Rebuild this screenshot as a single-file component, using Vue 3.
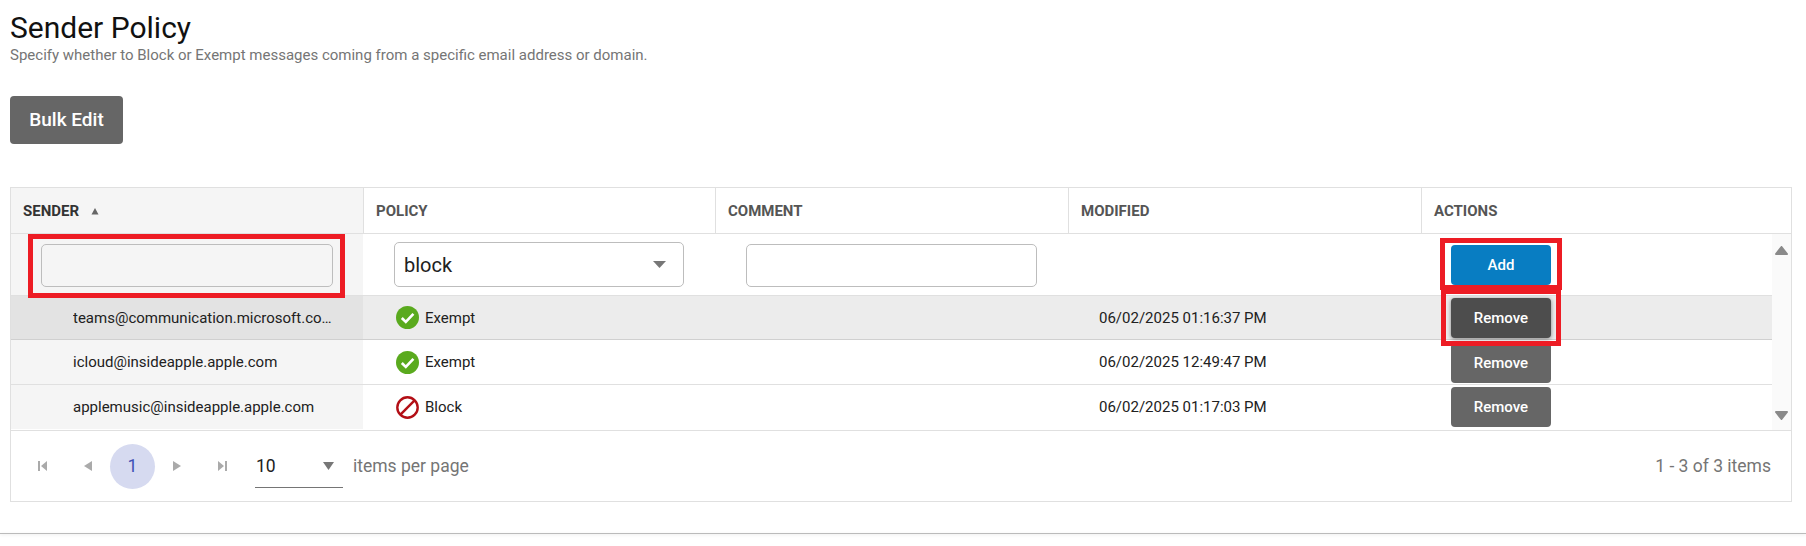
<script setup>
const rows = [
  { sender: "teams@communication.microsoft.com", policy: "Exempt", modified: "06/02/2025 01:16:37 PM", active: true },
  { sender: "icloud@insideapple.apple.com", policy: "Exempt", modified: "06/02/2025 12:49:47 PM" },
  { sender: "applemusic@insideapple.apple.com", policy: "Block", modified: "06/02/2025 01:17:03 PM" },
];
const columns = ["Sender", "Policy", "Comment", "Modified", "Actions"];
</script>

<template>
  <div class="page">
    <h1 class="title">Sender Policy</h1>
    <p class="subtitle">Specify whether to Block or Exempt messages coming from a specific email address or domain.</p>
    <button class="bulk">Bulk Edit</button>

    <div class="grid">
      <div class="head">
        <div v-for="(c, i) in columns" :key="c" class="head-cell" :class="{ sorted: i === 0 }">
          {{ c }}
          <svg v-if="i === 0" class="sort" width="8" height="8" viewBox="0 0 8 8"><path d="M4 1 L7.5 7.5 H.5 Z" fill="#666" /></svg>
        </div>
      </div>

      <div class="content">
        <div class="rows">
          <div class="row filter">
            <div class="cell first">
              <input class="field locked" type="text" />
              <span class="mark mark-sender"></span>
            </div>
            <div class="cell">
              <div class="field select">
                <span>block</span>
                <svg width="13" height="7" viewBox="0 0 13 7"><path d="M0 0 H13 L6.5 7 Z" fill="#777" /></svg>
              </div>
            </div>
            <div class="cell">
              <input class="field" type="text" />
            </div>
            <div class="cell"></div>
            <div class="cell action">
              <button class="small blue">Add</button>
              <span class="mark mark-add"></span>
            </div>
          </div>

          <div v-for="r in rows" :key="r.sender" class="row item" :class="{ active: r.active }">
            <div class="cell first sender"><span class="clip">{{ r.sender }}</span></div>
            <div class="cell policy">
              <svg v-if="r.policy === 'Exempt'" width="23" height="23" viewBox="0 0 23 23">
                <circle cx="11.5" cy="11.5" r="11.5" fill="#5aaa1e" />
                <path d="M5.8 12 L9.8 16 L17.4 7.8" fill="none" stroke="#fff" stroke-width="2.6" />
              </svg>
              <svg v-else width="23" height="23" viewBox="0 0 23 23">
                <circle cx="11.5" cy="11.5" r="10.2" fill="none" stroke="#b30f16" stroke-width="2.4" />
                <path d="M4.4 18.6 L18.6 4.4" stroke="#b30f16" stroke-width="2.4" />
              </svg>
              <span>{{ r.policy }}</span>
            </div>
            <div class="cell"></div>
            <div class="cell date"><span>{{ r.modified }}</span></div>
            <div class="cell action">
              <button class="small gray" :class="{ hover: r.active }">Remove</button>
              <span v-if="r.active" class="mark mark-remove"></span>
            </div>
          </div>
        </div>

        <div class="scrollbar">
          <svg width="13" height="9" viewBox="0 0 13 9"><path d="M6.5 1 L12 8 H1 Z" fill="#8a8a8a" stroke="#8a8a8a" stroke-width="2" stroke-linejoin="round" /></svg>
          <svg width="13" height="9" viewBox="0 0 13 9"><path d="M1 1 H12 L6.5 8 Z" fill="#8a8a8a" stroke="#8a8a8a" stroke-width="2" stroke-linejoin="round" /></svg>
        </div>
      </div>

      <div class="pager">
        <div class="pager-left">
          <span class="nav">
            <svg width="9" height="10" viewBox="0 0 9 10"><path d="M0 0 H2 V10 H0 Z M9 0 V10 L3 5 Z" fill="#aaa" /></svg>
          </span>
          <span class="nav">
            <svg width="9" height="10" viewBox="0 0 9 10"><path d="M9 0 V10 L1 5 Z" fill="#aaa" /></svg>
          </span>
          <span class="page-num">1</span>
          <span class="nav">
            <svg width="9" height="10" viewBox="0 0 9 10"><path d="M0 0 V10 L8 5 Z" fill="#aaa" /></svg>
          </span>
          <span class="nav">
            <svg width="9" height="10" viewBox="0 0 9 10"><path d="M0 0 V10 L6 5 Z M7 0 H9 V10 H7 Z" fill="#aaa" /></svg>
          </span>
          <div class="per-page">
            <span>10</span>
            <svg width="11" height="8" viewBox="0 0 11 8"><path d="M0 0 H11 L5.5 8 Z" fill="#777" /></svg>
          </div>
          <span class="muted">items per page</span>
        </div>
        <span class="muted">1 - 3 of 3 items</span>
      </div>
    </div>

    <div class="rule"></div>
  </div>
</template>

<style scoped>
.page {
  height: 546px;
  box-sizing: border-box;
  padding-top: 10px;
  background: #fff;
  font-family: Roboto, "Liberation Sans", sans-serif;
  color: #212121;
  overflow: hidden;
}

.title {
  margin: 0 0 0 10px;
  font-size: 30px;
  font-weight: 400;
  line-height: 36px;
  color: #111;
}

.subtitle {
  margin: 0 0 0 10px;
  font-size: 15px;
  line-height: 18px;
  color: #757575;
}

.bulk {
  display: block;
  margin: 32px 0 43px 10px;
  width: 113px;
  height: 48px;
  padding: 0 0 2px;
  border: none;
  border-radius: 4px;
  background: #666;
  color: #fff;
  font: 500 19px Roboto, sans-serif;
}

.grid {
  margin: 0 14px 0 10px;
  border: 1px solid #e0e0e0;
  box-sizing: border-box;
  height: 315px;
}

.head {
  display: grid;
  grid-template-columns: 352px 352px 353px 353px 1fr;
  height: 45px;
  border-bottom: 1px solid #e0e0e0;
}

.head-cell {
  display: flex;
  align-items: center;
  padding: 0 12px;
  border-left: 1px solid #e0e0e0;
  font-size: 15px;
  font-weight: 700;
  text-transform: uppercase;
  color: #555;
}

.head-cell:first-child {
  border-left: none;
}

.head-cell.sorted {
  background: #f5f5f5;
  color: #333;
}

.sort {
  margin-left: 12px;
}

.content {
  display: flex;
  height: 196px;
  border-bottom: 1px solid #e0e0e0;
}

.rows {
  flex: 1;
  min-width: 0;
}

.row {
  display: grid;
  grid-template-columns: 352px 352px 353px 353px 1fr;
  box-sizing: border-box;
  border-bottom: 1px solid #e0e0e0;
}

.row:last-child {
  border-bottom: none;
  padding-bottom: 1px;
}

.filter {
  height: 62px;
}

.item {
  height: 45px;
  font-size: 15px;
}

.item.active {
  height: 44px;
  background: #ececec;
  border-bottom-color: #d0d0d0;
}

.item:nth-child(3) .small {
  margin-top: 2px;
}

.cell {
  position: relative;
  display: flex;
  align-items: center;
  min-width: 0;
}

.first {
  background: #f5f5f5;
}

.active .first {
  background: #e3e3e3;
}

.filter .cell {
  align-items: flex-start;
  padding: 10px 31px 0;
}

.filter .first {
  padding: 10px 30px 0;
}

.filter .action {
  padding-top: 11px;
}

.field {
  box-sizing: border-box;
  width: 292px;
  height: 43px;
  margin: 0;
  padding: 0 10px;
  border: 1px solid #bdbdbd;
  border-radius: 5px;
  background: #fff;
  outline: none;
}

.locked {
  background: #f5f5f5;
}

.select {
  display: flex;
  align-items: center;
  justify-content: space-between;
  height: 45px;
  margin-top: -2px;
  font-size: 20px;
  color: #212121;
  padding: 0 17px 0 9px;
}

.sender {
  padding: 0 29px 0 62px;
}

.clip {
  overflow: hidden;
  text-overflow: ellipsis;
  white-space: nowrap;
}

.policy {
  padding-left: 33px;
  gap: 6px;
}

.date {
  padding-left: 31px;
}

.filter .action,
.item .action {
  justify-content: flex-start;
  padding-left: 30px;
}

.small {
  width: 100px;
  height: 40px;
  padding: 0;
  border: none;
  border-radius: 4px;
  color: #fff;
  font: 500 15px Roboto, sans-serif;
}

.blue {
  background: #087dc2;
}

.gray {
  background: #666;
}

.gray.hover {
  background: #4d4d4d;
  box-shadow: 0 1px 4px rgba(0, 0, 0, 0.45);
}

.mark {
  position: absolute;
  z-index: 2;
  box-sizing: border-box;
  border: 5px solid #ed1c24;
  pointer-events: none;
}

.mark-sender {
  left: 17px;
  top: 0;
  width: 317px;
  height: 64px;
}

.mark-add {
  left: 19px;
  top: 4px;
  width: 122px;
  height: 52px;
}

.mark-remove {
  left: 20px;
  top: -7px;
  width: 120px;
  height: 57px;
}

.scrollbar {
  width: 19px;
  display: flex;
  flex-direction: column;
  align-items: center;
  justify-content: space-between;
  box-sizing: border-box;
  padding: 12px 0 10px;
  background: #fafafa;
}

.pager {
  display: flex;
  align-items: center;
  justify-content: space-between;
  height: 70px;
  padding: 0 20px 0 9px;
  font-size: 17.5px;
}

.pager-left {
  display: flex;
  align-items: center;
}

.nav {
  display: flex;
  align-items: center;
  justify-content: center;
  width: 45px;
  height: 45px;
}

.page-num {
  display: flex;
  align-items: center;
  justify-content: center;
  width: 45px;
  height: 45px;
  border-radius: 50%;
  background: #d6daf0;
  color: #3f51b5;
}

.per-page {
  box-sizing: border-box;
  display: flex;
  align-items: center;
  justify-content: space-between;
  width: 88px;
  height: 42px;
  margin: 1px 0 0 10px;
  padding: 0 9px 0 1px;
  border-bottom: 1px solid #757575;
  color: #212121;
}

.muted {
  color: #757575;
}

.pager-left .muted {
  margin-left: 10px;
}

.rule {
  margin-top: 31px;
  height: 1px;
  background: #bbb;
  box-shadow: 0 1px 3px rgba(0, 0, 0, 0.12);
}
</style>
